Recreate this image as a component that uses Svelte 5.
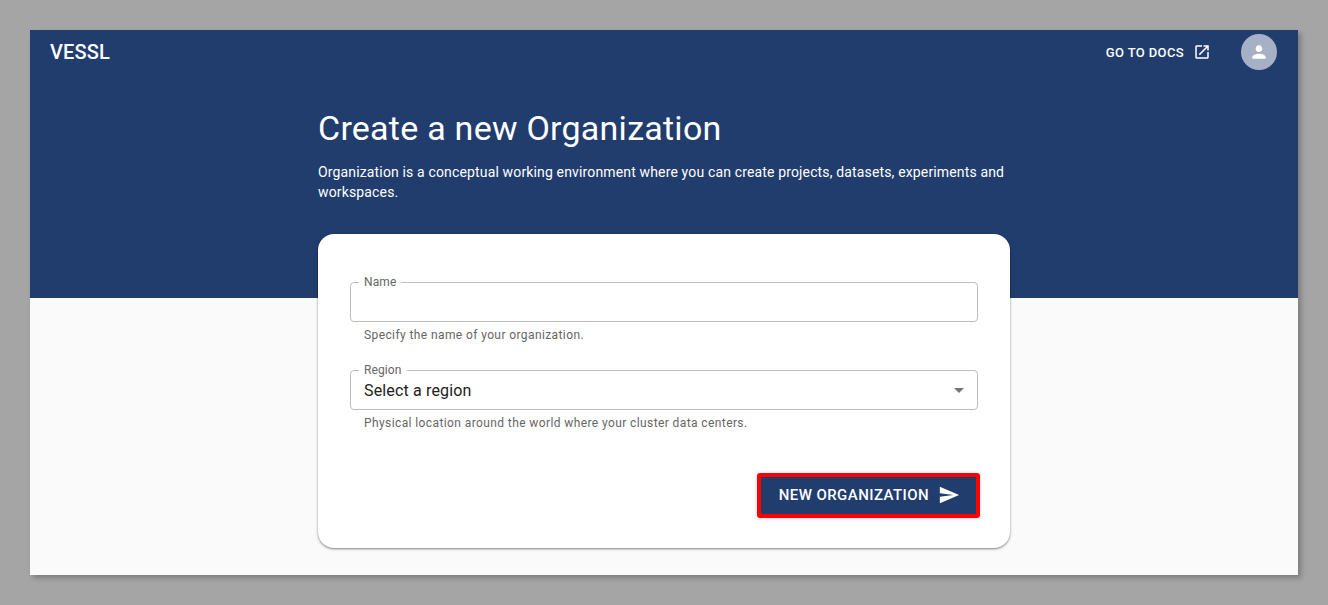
<script>
  let name = $state('');
  let region = $state('');
  const regions = ['US West', 'US East', 'Asia Pacific', 'Europe'];
</script>

<div class="page">
  <header class="bar">
    <a class="brand" href="#home">VESSL</a>
    <nav>
      <a class="docs" href="#docs">
        Go to docs
        <svg width="18" height="18" viewBox="0 0 24 24" aria-hidden="true">
          <path d="M19 19H5V5h7V3H5c-1.11 0-2 .9-2 2v14c0 1.1.89 2 2 2h14c1.1 0 2-.9 2-2v-7h-2v7zM14 3v2h3.59l-9.83 9.83 1.41 1.41L19 6.41V10h2V3h-7z" />
        </svg>
      </a>
      <button class="avatar" type="button" aria-label="Account">
        <svg width="20" height="20" viewBox="0 0 24 24" aria-hidden="true">
          <path d="M12 12c2.21 0 4-1.79 4-4s-1.79-4-4-4-4 1.79-4 4 1.79 4 4 4zm0 2c-2.67 0-8 1.34-8 4v2h16v-2c0-2.66-5.33-4-8-4z" />
        </svg>
      </button>
    </nav>
  </header>

  <main>
    <h1>Create a new Organization</h1>
    <p class="intro">
      Organization is a conceptual working environment where you can create projects, datasets, experiments and workspaces.
    </p>

    <form class="card" onsubmit={(e) => e.preventDefault()}>
      <div class="field">
        <label for="name">Name</label>
        <input id="name" type="text" bind:value={name} aria-describedby="name-help" />
        <p id="name-help">Specify the name of your organization.</p>
      </div>
      <div class="field">
        <label for="region">Region</label>
        <div class="select">
          <select id="region" bind:value={region} aria-describedby="region-help">
            <option value="">Select a region</option>
            {#each regions as item}
              <option value={item}>{item}</option>
            {/each}
          </select>
          <svg width="24" height="24" viewBox="0 0 24 24" aria-hidden="true"><path d="M7 10l5 5 5-5z" /></svg>
        </div>
        <p id="region-help">Physical location around the world where your cluster data centers.</p>
      </div>
      <button class="submit" type="submit">
        New organization
        <svg width="22" height="22" viewBox="0 0 24 24" aria-hidden="true">
          <path d="M2.01 21L23 12 2.01 3 2 10l15 2-15 2z" />
        </svg>
      </button>
    </form>
  </main>
</div>

<style>
  :global(body) {
    background: #a5a5a5;
    font-family: Roboto, sans-serif;
  }

  :global(*) {
    box-sizing: border-box;
  }

  svg {
    fill: currentColor;
    flex: none;
  }

  .page {
    margin: 30px;
    padding-bottom: 27px;
    color: #fff;
    background: linear-gradient(#213d6d 268px, #fafafa 268px);
    box-shadow: 3px 3px 5px rgba(0, 0, 0, 0.25);
  }

  .bar {
    display: flex;
    align-items: center;
    justify-content: space-between;
    height: 44px;
    padding: 0 21px 0 20px;
  }

  nav {
    display: flex;
    align-items: center;
    gap: 30px;
  }

  a {
    color: inherit;
    text-decoration: none;
  }

  .brand {
    font-size: 20px;
    font-weight: 500;
    letter-spacing: 0.0075em;
  }

  .docs {
    display: flex;
    align-items: center;
    gap: 9px;
    font-size: 13px;
    font-weight: 500;
    letter-spacing: 0.02857em;
    text-transform: uppercase;
  }

  .avatar {
    display: grid;
    place-items: center;
    width: 36px;
    height: 36px;
    padding: 0;
    border: 0;
    border-radius: 50%;
    color: #fff;
    background: #a7b1c5;
  }

  main {
    max-width: 692px;
    margin: 0 auto;
    padding-top: 34px;
  }

  h1 {
    margin: 0;
    font-size: 34px;
    font-weight: 400;
    line-height: 40px;
    letter-spacing: 0.00735em;
  }

  .intro {
    margin: 14px 0 32px;
    font-size: 14px;
    line-height: 20px;
    letter-spacing: 0.01071em;
  }

  .card {
    display: flex;
    flex-direction: column;
    gap: 27px;
    padding: 48px 32px 32px;
    border-radius: 16px;
    color: #212121;
    background: #fff;
    box-shadow: 0 1px 2px rgba(0, 0, 0, 0.4), 0 1px 4px rgba(0, 0, 0, 0.12);
  }

  .field {
    position: relative;
  }

  label {
    position: absolute;
    top: -8px;
    left: 9px;
    padding: 0 5px;
    color: #666;
    background: #fff;
    font-size: 12px;
    line-height: 16px;
    letter-spacing: 0.00938em;
    z-index: 1;
  }

  input,
  select {
    display: block;
    width: 100%;
    height: 40px;
    padding: 0 13px;
    border: 1px solid #bdbdbd;
    border-radius: 4px;
    color: inherit;
    background: #fff;
    font: 16px Roboto, sans-serif;
    letter-spacing: 0.00938em;
    appearance: none;
  }

  .select {
    display: grid;
    align-items: center;
  }

  .select > * {
    grid-area: 1 / 1;
  }

  .select svg {
    justify-self: end;
    margin-right: 7px;
    color: #757575;
    pointer-events: none;
  }

  .field p {
    margin: 5px 14px 0;
    color: #666;
    font-size: 12px;
    line-height: 16px;
    letter-spacing: 0.03333em;
  }

  .submit {
    display: flex;
    align-items: center;
    align-self: flex-end;
    gap: 9px;
    height: 45px;
    margin: 15px -2px -2px 0;
    padding: 0 16px 1px 18px;
    border: 4px solid #f00;
    border-radius: 3px;
    color: #fff;
    background: #213d6d;
    box-shadow: 0 1px 4px rgba(0, 0, 0, 0.15);
    font: 500 15px Roboto, sans-serif;
    letter-spacing: 0.02857em;
    text-transform: uppercase;
  }
</style>
